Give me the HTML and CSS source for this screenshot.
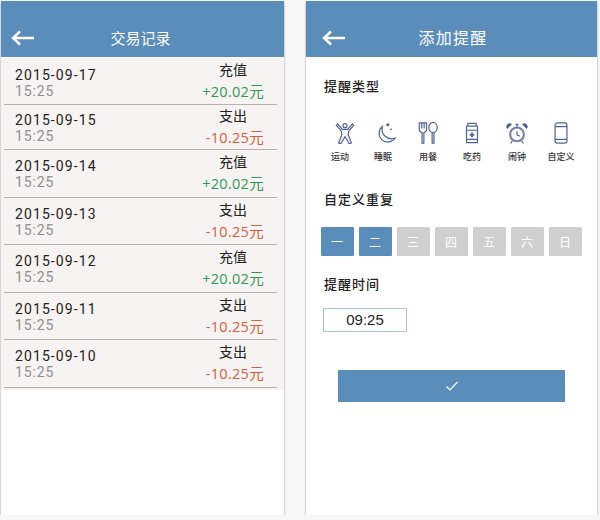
FILE: index.html
```html
<!DOCTYPE html>
<html lang="zh-CN">
<head>
  <meta charset="UTF-8">
  <title>交易记录 / 添加提醒</title>
  <link rel="stylesheet" href="styles.css">
</head>
<body>
  <div class="screens">

    <div class="screen screen-list">
      <div class="header">
        <svg class="back" width="24" height="16" viewBox="0 0 24 16"><path d="M23 8H2M9 1.5 2 8l7 6.5" fill="none" stroke="#fff" stroke-width="2.4"/></svg>
        <div class="header-title">交易记录</div>
      </div>
      <div class="records">
        <div class="record top"><div class="when"><div class="date">2015-09-17</div><div class="time">15:25</div></div><div class="info"><div class="kind">充值</div><div class="amount plus">+20.02元</div></div></div>
        <div class="record short"><div class="when"><div class="date">2015-09-15</div><div class="time">15:25</div></div><div class="info"><div class="kind">支出</div><div class="amount minus">-10.25元</div></div></div>
        <div class="record"><div class="when"><div class="date">2015-09-14</div><div class="time">15:25</div></div><div class="info"><div class="kind">充值</div><div class="amount plus">+20.02元</div></div></div>
        <div class="record"><div class="when"><div class="date">2015-09-13</div><div class="time">15:25</div></div><div class="info"><div class="kind">支出</div><div class="amount minus">-10.25元</div></div></div>
        <div class="record"><div class="when"><div class="date">2015-09-12</div><div class="time">15:25</div></div><div class="info"><div class="kind">充值</div><div class="amount plus">+20.02元</div></div></div>
        <div class="record"><div class="when"><div class="date">2015-09-11</div><div class="time">15:25</div></div><div class="info"><div class="kind">支出</div><div class="amount minus">-10.25元</div></div></div>
        <div class="record"><div class="when"><div class="date">2015-09-10</div><div class="time">15:25</div></div><div class="info"><div class="kind">支出</div><div class="amount minus">-10.25元</div></div></div>
      </div>
    </div>

    <div class="screen screen-form">
      <div class="header">
        <svg class="back" width="24" height="16" viewBox="0 0 24 16"><path d="M23 8H2M9 1.5 2 8l7 6.5" fill="none" stroke="#fff" stroke-width="2.4"/></svg>
        <div class="header-title wide">添加提醒</div>
      </div>

      <div class="section-label first">提醒类型</div>
      <div class="types">
        <div class="type">
          <svg viewBox="0 0 24 24"><circle cx="12" cy="4" r="2.2"/><path d="M4 2 9 8h6l5-6 1.500 1.500L16 10l-.5 4L19 23l-2.500.5L12 16l-4.500 7.500L5 23l3.500-9L8 10 2.500 3.500z"/></svg>
          <span class="nudge-a">运动</span>
        </div>
        <div class="type">
          <svg viewBox="0 0 24 24"><path d="M8 5a9.500 9.500 0 1 0 14 12.500A10.500 10.500 0 0 1 8 5z"/><circle class="solid" cx="14" cy="3" r="1.700"/><circle class="solid" cx="17.500" cy="8" r="1"/></svg>
          <span class="nudge-b">睡眠</span>
        </div>
        <div class="type">
          <svg viewBox="0 0 24 24"><path d="M2.500 1v7q0 3 3 3.500V23h2V11.500q3-.5 3-3.500V1zM5.200 1v6M7.800 1v6"/><ellipse cx="17.500" cy="6" rx="4.500" ry="5.500"/><path d="M16.500 11.500V23h2V11.500"/></svg>
          <span>用餐</span>
        </div>
        <div class="type">
          <svg viewBox="0 0 24 24"><path d="M7.500 1.500h9v3h-9zM6 4.500h12V22.500H6zM6 9h12M6 19h12"/><path class="solid" d="M11 11.500h2v1.500h1.500v2H13v1.500h-2V15H9.500v-2H11z"/></svg>
          <span>吃药</span>
        </div>
        <div class="type">
          <svg viewBox="0 0 24 24"><circle class="ring" cx="12" cy="13.500" r="7.500"/><path d="M12 10v4l3 1.500M10.500 2.500h3M12 2.500v3M7 20.500l-2 3M17 20.500l2 3"/><path class="solid" d="M6.500 2.500 1.500 7.500a3.500 3.500 0 0 1 5-5zM17.500 2.500l5 5a3.500 3.500 0 0 0-5-5z"/></svg>
          <span>闹钟</span>
        </div>
        <div class="type">
          <svg viewBox="0 0 24 24"><rect x="5.500" y="1" width="13" height="22" rx="2.500"/><path d="M5.500 5h13M5.500 19h13"/></svg>
          <span>自定义</span>
        </div>
      </div>

      <div class="section-label repeat">自定义重复</div>
      <div class="days">
        <div class="day on">一</div>
        <div class="day on">二</div>
        <div class="day">三</div>
        <div class="day">四</div>
        <div class="day">五</div>
        <div class="day">六</div>
        <div class="day">日</div>
      </div>

      <div class="section-label remind">提醒时间</div>
      <div class="time-box">09:25</div>

      <div class="submit">
        <svg width="14" height="12" viewBox="0 0 14 12"><path d="M1.500 6.500 5 10l7.500-8" fill="none" stroke="#fff" stroke-width="1.200"/></svg>
      </div>
    </div>

  </div>
</body>
</html>
```

FILE: styles.css
```css
body {
  margin: 0;
  background: #f7f7f7;
  font-family: 'Open Sans', 'Noto Sans CJK SC', sans-serif;
}
.screens {
  display: flex;
  gap: 22px;
  padding: 1px 0 0 1px;
}
.screen {
  height: 514px;
  background: #fff;
  box-shadow: 0 2px 2px rgba(0, 0, 0, 0.4);
}
.screen-list {
  width: 283px;
}
.screen-form {
  width: 291px;
}
.header {
  display: flex;
  align-items: center;
  justify-content: center;
  position: relative;
  height: 56px;
  padding-top: 17px;
  box-sizing: border-box;
  background: #5b8dba;
  color: #fff;
}
.back {
  position: absolute;
  left: 10px;
  top: 29px;
}
.screen-form .back {
  left: 16px;
}
.header-title {
  font-size: 15px;
  margin-right: 4px;
}
.header-title.wide {
  font-size: 16px;
  letter-spacing: 1.200px;
  margin: 0 0 0 3px;
  padding-bottom: 1px;
}

/* list */
.records {
  margin-top: 1px;
  padding-bottom: 2px;
  background: #f6f3f2;
}
.record {
  display: flex;
  justify-content: space-between;
  align-items: center;
  height: 47.500px;
  box-sizing: border-box;
  margin: 0 7px 0 3px;
  padding: 0 13px 0 11px;
  border-bottom: 1px solid #b4b2b0;
}
.record.top {
  height: 46.500px;
}
.record.short {
  height: 45.500px;
}
.when {
  padding-top: 3px;
}
.record.top .when {
  padding-top: 5px;
}
.date {
  font-family: Roboto, sans-serif;
  font-size: 14px;
  line-height: 16px;
  letter-spacing: 1.100px;
  color: #222;
}
.time {
  font-family: Roboto, sans-serif;
  font-size: 14px;
  line-height: 17px;
  letter-spacing: 0.900px;
  color: #8f8f8f;
}
.info {
  text-align: right;
}
.kind {
  font-size: 14px;
  line-height: 22px;
  color: #222;
  padding-right: 17px;
}
.amount {
  font-size: 14.500px;
  line-height: 22px;
  letter-spacing: 0.300px;
}
.plus {
  color: #2f9a55;
}
.minus {
  color: #d2603f;
}

/* form */
.section-label {
  font-size: 13px;
  font-weight: 500;
  line-height: 18px;
  letter-spacing: 1px;
  color: #222;
  padding-left: 18px;
}
.section-label.first {
  margin-top: 20px;
}
.section-label.repeat {
  margin-top: 27px;
}
.section-label.remind {
  margin-top: 19px;
}
.types {
  display: grid;
  grid-template-columns: 42px 40px 44px 44px 46px 42px;
  padding-left: 18px;
  margin-top: 27px;
}
.type {
  display: flex;
  flex-direction: column;
  align-items: center;
  gap: 7px;
}
.type svg {
  width: 22px;
  height: 22px;
  fill: none;
  stroke: #4f6496;
  stroke-width: 1.300;
}
.type svg .solid {
  fill: #4f6496;
  stroke: none;
}
.type svg .ring {
  stroke: #74869f;
  stroke-width: 2.400;
}
.type span {
  font-size: 9px;
  font-weight: 500;
  line-height: 12px;
  color: #333;
}
.nudge-a {
  margin-right: 10px;
}
.nudge-b {
  margin-right: 6px;
}
.days {
  display: flex;
  gap: 5px;
  margin: 19px 0 0 14.500px;
}
.day {
  display: flex;
  align-items: center;
  justify-content: center;
  width: 33px;
  height: 29px;
  border-radius: 1px;
  background: #cfcfcf;
  color: #fff;
  font-size: 12px;
}
.day.on {
  background: #5b8dba;
}
.time-box {
  width: 84px;
  height: 24px;
  box-sizing: border-box;
  margin: 15px 0 0 17px;
  border: 1px solid #a9c0d6;
  font-family: 'Liberation Sans', sans-serif;
  font-size: 15px;
  line-height: 22px;
  text-align: center;
  color: #222;
}
.submit {
  display: flex;
  align-items: center;
  justify-content: center;
  width: 227px;
  height: 32px;
  margin: 38px 0 0 32px;
  background: #5b8dba;
}
```
